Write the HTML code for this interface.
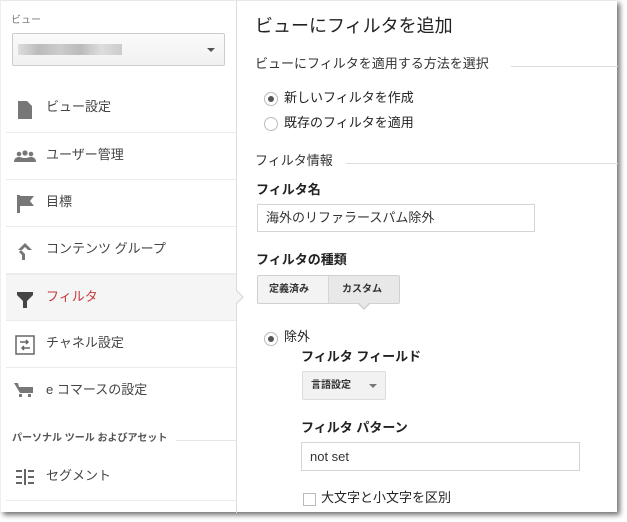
<!DOCTYPE html>
<html><head><meta charset="utf-8"><style>
*{box-sizing:border-box;margin:0;padding:0}
body{width:627px;height:522px;background:#fff;position:relative;overflow:hidden;font-family:"Liberation Sans","Noto Sans CJK JP",sans-serif;color:#333;line-height:1.15}
.frame{position:absolute;left:0;top:0;width:617px;height:512px;background:#fff;box-shadow:3px 3px 5px rgba(0,0,0,.55);border-top:1px solid #e8e8e8;border-left:1px solid #eee}
.side{position:absolute;left:0;top:0;width:236px;height:512px;border-right:1px solid #ddd}
.a{position:absolute;white-space:nowrap}
.item{position:absolute;left:5px;width:230px;height:47px;border-bottom:1px solid #ebebeb;font-size:13px;color:#444}
.item .t{position:absolute;left:40px;top:15px}
.item .i{position:absolute;left:10px;top:14px}
.radio{position:absolute;width:14px;height:14px;border:1px solid #bbb;border-radius:50%;background:#fff}
.radio.on::after{content:"";position:absolute;left:3px;top:3px;width:6px;height:6px;border-radius:50%;background:#555}
.lab{font-size:13px;color:#222}
.b{font-weight:bold;font-size:13px;color:#222}
.inp{position:absolute;border:1px solid #d5d5d5;background:#fff;font-size:13px;color:#333;padding-left:8px}
</style></head><body>
<div class="frame">
<div class="side">
 <div class="a" style="left:10px;top:14px;font-size:10px;color:#777">ビュー</div>
 <div class="a" style="left:11px;top:32px;width:213px;height:33px;border:1px solid #ccc;border-radius:2px;background:linear-gradient(#fafafa,#f1f1f1)">
  <div class="a" style="left:5px;top:10px;width:104px;height:11px;background:linear-gradient(90deg,#ddd,#bbb 20%,#ccc 40%,#bbb 60%,#ddd 80%,#ccc)"></div>
  <div class="a" style="left:194px;top:14px;border:4px solid transparent;border-top:4px solid #555;border-bottom:0"></div>
 </div>
 <div class="item" style="top:85px;height:47px"><svg class="i" width="16" height="20" viewBox="0 0 16 20" style="left:11px"><path d="M1 1h9l5 5v13H1z" fill="#777"/></svg><span class="t" style="top:14px">ビュー設定</span></div>
 <div class="item" style="top:132px"><svg class="i" width="22" height="16" viewBox="0 0 22 16" style="left:8px;top:17px"><circle cx="5" cy="4" r="2.3" fill="#777"/><circle cx="11" cy="3" r="2.6" fill="#777"/><circle cx="17" cy="4" r="2.3" fill="#777"/><path d="M0 12c0-4 3-5 5-5s3 1 6 1 4-1 6-1 5 1 5 5z" fill="#777"/></svg><span class="t">ユーザー管理</span></div>
 <div class="item" style="top:179px"><svg class="i" width="20" height="20" viewBox="0 0 20 20"><path d="M1 1h3v18H1zM4 2h14l-4 5 4 5H4z" fill="#777"/></svg><span class="t">目標</span></div>
 <div class="item" style="top:226px"><svg class="i" width="18" height="20" viewBox="0 0 18 20"><path d="M9 2l7 7h-4l-3-3-3 3H2zM5 9l4 4v6H6v-5L3 11z" fill="#777"/></svg><span class="t">コンテンツ グループ</span></div>
 <div class="item" style="top:273px;background:#f5f5f5;border-top:1px solid #ebebeb"><svg class="i" width="18" height="18" viewBox="0 0 18 18" style="top:16px"><path d="M1 1h16v3l-6 6v7H7v-7L1 4z" fill="#444"/></svg><span class="t" style="color:#c5393e">フィルタ</span></div>
 <div class="item" style="top:320px"><svg class="i" width="20" height="20" viewBox="0 0 20 20" style="left:9px"><rect x="1" y="1" width="18" height="18" fill="none" stroke="#666" stroke-width="1.5"/><path d="M5 7h8M11 5l2 2-2 2M15 13H7M9 11l-2 2 2 2" stroke="#666" stroke-width="1.5" fill="none"/></svg><span class="t">チャネル設定</span></div>
 <div class="item" style="top:367px;border-bottom:0"><svg class="i" width="20" height="18" viewBox="0 0 20 18" style="left:8px"><path d="M0 1h4l1 4h14v6H6z" fill="#777"/><rect x="5" y="12" width="3" height="3" fill="#777"/><rect x="14" y="12" width="3" height="3" fill="#777"/></svg><span class="t">e コマースの設定</span></div>
 <div class="a" style="left:11px;top:432px;font-size:10px;font-weight:bold;color:#555">パーソナル ツール およびアセット</div>
 <div class="a" style="left:175px;top:439px;width:60px;height:1px;background:#e5e5e5"></div>
 <div class="item" style="top:453px"><svg class="i" width="20" height="18" viewBox="0 0 20 18" style="left:9px"><path d="M1 3h6M1 9h6M1 15h6M13 3h6M13 9h6M13 15h6M10 1v16" stroke="#666" stroke-width="2"/></svg><span class="t">セグメント</span></div>
 <div class="a" style="left:236px;top:289px;width:0;height:0;border:7px solid transparent;border-left:7px solid #ddd"></div>
 <div class="a" style="left:235px;top:290px;width:0;height:0;border:6px solid transparent;border-left:6px solid #f5f5f5"></div>
</div>

<div class="a" style="left:254px;top:15px;font-size:18px;color:#222">ビューにフィルタを追加</div>
<div class="a" style="left:254px;top:56px;font-size:13px;color:#333">ビューにフィルタを適用する方法を選択</div>
<div class="a" style="left:510px;top:65px;width:107px;height:1px;background:#ddd"></div>
<div class="radio on" style="left:263px;top:91px"></div><div class="a lab" style="left:283px;top:90px">新しいフィルタを作成</div>
<div class="radio" style="left:263px;top:116px"></div><div class="a lab" style="left:283px;top:115px">既存のフィルタを適用</div>
<div class="a" style="left:254px;top:153px;font-size:13px;color:#333">フィルタ情報</div>
<div class="a" style="left:345px;top:162px;width:272px;height:1px;background:#ddd"></div>
<div class="a b" style="left:255px;top:182px">フィルタ名</div>
<div class="inp" style="left:256px;top:203px;width:278px;height:28px;line-height:26px">海外のリファラースパム除外</div>
<div class="a b" style="left:255px;top:252px">フィルタの種類</div>
<div class="a" style="left:256px;top:274px;width:143px;height:29px;border:1px solid #d0d0d0;border-radius:2px;background:#f3f3f3"></div>
<div class="a" style="left:327px;top:275px;width:71px;height:27px;background:#e8e8e8;border-left:1px solid #d5d5d5"></div>
<div class="a" style="left:268px;top:283px;font-size:10px;font-weight:bold;color:#333">定義済み</div>
<div class="a" style="left:341px;top:283px;font-size:10px;font-weight:bold;color:#333">カスタム</div>
<div class="a" style="left:357px;top:303px;border:6px solid transparent;border-top:6px solid #d0d0d0;border-bottom:0"></div>
<div class="a" style="left:358px;top:302px;border:5px solid transparent;border-top:5px solid #e8e8e8;border-bottom:0"></div>
<div class="radio on" style="left:263px;top:331px"></div><div class="a lab" style="left:283px;top:329px">除外</div>
<div class="a b" style="left:300px;top:349px">フィルタ フィールド</div>
<div class="a" style="left:301px;top:370px;width:84px;height:29px;border:1px solid #ddd;border-radius:2px;background:#f2f2f2"></div>
<div class="a" style="left:310px;top:379px;font-size:10px;font-weight:bold;color:#333">言語設定</div>
<div class="a" style="left:368px;top:383px;border:4px solid transparent;border-top:4px solid #777;border-bottom:0"></div>
<div class="a b" style="left:300px;top:420px">フィルタ パターン</div>
<div class="inp" style="left:300px;top:441px;width:279px;height:29px;line-height:27px">not set</div>
<div class="a" style="left:302px;top:492px;width:13px;height:13px;border:1px solid #bbb;background:#fff"></div>
<div class="a lab" style="left:320px;top:490px">大文字と小文字を区別</div>
</div>
</body></html>
